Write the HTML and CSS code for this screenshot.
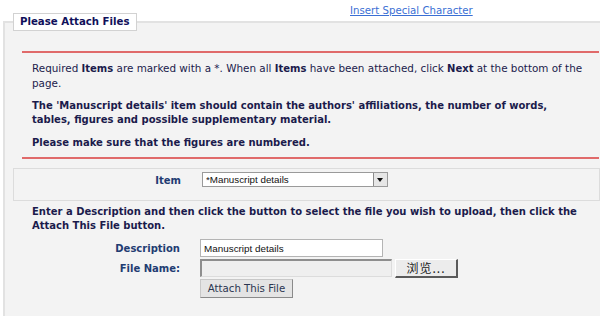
FILE: index.html
```html
<!DOCTYPE html>
<html lang="en">
<head>
  <meta charset="UTF-8" />
  <title>Attach Files</title>
  <link rel="stylesheet" href="styles.css">
</head>
<body>

  <div class="top-row">
    <a href="#" class="special-link">Insert Special Character</a>
  </div>

  <fieldset class="attach">
    <legend>Please Attach Files</legend>

    <div class="notice">
      <p>Required <b>Items</b> are marked with a *. When all <b>Items</b> have been attached, click <b>Next</b> at the bottom of the page.</p>
      <p class="strong">The 'Manuscript details' item should contain the authors' affiliations, the number of words, tables, figures and possible supplementary material.</p>
      <p class="strong">Please make sure that the figures are numbered.</p>
    </div>

    <div class="item-row">
      <label for="itemType" class="field-label">Item</label>
      <div class="select-wrap">
        <select id="itemType">
          <option>*Manuscript details</option>
          <option>Figure</option>
          <option>Table</option>
        </select>
        <span class="select-arrow"></span>
      </div>
    </div>

    <p class="instructions">Enter a Description and then click the button to select the file you wish to upload, then click the Attach This File button.</p>

    <div class="upload-grid">
      <label for="desc" class="field-label">Description</label>
      <input type="text" id="desc" class="desc-input" value="Manuscript details"/>

      <label for="fileName" class="field-label">File Name:</label>
      <div class="file-row">
        <input type="text" id="fileName" class="file-input" readonly/>
        <button type="button" class="browse-btn">浏览...</button>
      </div>

      <span></span>
      <div>
        <button type="button" class="attach-btn">Attach This File</button>
      </div>
    </div>
  </fieldset>

</body>
</html>
```

FILE: styles.css
```css
html {
  overflow: hidden;
}

body {
  margin: 0;
  background: #fff;
  font-family: 'DejaVu Sans', Verdana, sans-serif;
  font-size: 10.4px;
  color: #1b1b4c;
}

b,
.strong {
  font-weight: bold;
  font-size: 10px;
}

.top-row {
  height: 13px;
  padding-left: 350px;
}

.special-link {
  display: inline-block;
  margin-top: 4px;
  line-height: 14px;
  color: #3a6fd4;
  font-size: 10.2px;
}

.attach {
  margin: 0 -4px 0 3px;
  padding: 0 0 20px;
  border: 2px solid #e2e2e2;
  background: #f3f3f3;
  min-width: 0;
}

.attach legend {
  margin-left: 8px;
  padding: 0 6px;
  background: #fff;
  border: 1px solid #d2d2d2;
  font-weight: bold;
  font-size: 10.2px;
  line-height: 16px;
  color: #10105a;
}

.notice {
  margin: 20px 3px 0 17px;
  padding: 8px 12px 7px 10px;
  border-top: 2px solid #e06a6a;
  border-bottom: 2px solid #e06a6a;
}

.notice p {
  margin: 0 0 9px;
  line-height: 14px;
}

.notice p:last-child {
  margin-bottom: 0;
}

.item-row {
  display: flex;
  align-items: flex-start;
  gap: 21px;
  margin: 9px 2px 0 8px;
  padding: 3px 0 11px;
  border: 1px solid #dcdcdc;
}

.field-label {
  font-weight: bold;
  font-size: 10px;
  color: #1f3c72;
  text-align: right;
}

.item-row .field-label {
  width: 167px;
  line-height: 16px;
  margin-top: 1px;
}

.select-wrap {
  position: relative;
  width: 186px;
  height: 15px;
}

.select-wrap select {
  appearance: none;
  width: 100%;
  height: 15px;
  margin: 0;
  padding: 0 0 0 3px;
  border: 1px solid #9a9a9a;
  border-radius: 0;
  background: #fff;
  font-family: 'Liberation Sans', Arial, sans-serif;
  font-size: 9.8px;
  color: #111;
  line-height: 13px;
}

.select-arrow {
  position: absolute;
  top: 1px;
  right: 1px;
  width: 13px;
  height: 13px;
  background: #e6e6e6;
  border-left: 1px solid #8c8c8c;
}

.select-arrow::after {
  content: "";
  position: absolute;
  left: 3px;
  top: 5px;
  border-left: 3px solid transparent;
  border-right: 3px solid transparent;
  border-top: 4px solid #111;
}

.instructions {
  margin: 4px 8px 0 27px;
  line-height: 14px;
  font-weight: bold;
  font-size: 10px;
}

.upload-grid {
  display: grid;
  grid-template-columns: 175px auto;
  column-gap: 20px;
  row-gap: 1px;
  align-items: center;
  margin-top: 6px;
}

.desc-input {
  width: 183px;
  height: 18px;
  box-sizing: border-box;
  margin: 0;
  padding: 0 3px;
  border: 1px solid #b4b4b4;
  background: #fff;
  font-family: 'Liberation Sans', Arial, sans-serif;
  font-size: 9.9px;
  color: #111;
}

.file-row {
  display: flex;
  gap: 3px;
  margin-top: 1px;
}

.file-input {
  width: 192px;
  height: 18px;
  box-sizing: border-box;
  margin: 0;
  border: 1px solid #dcdcdc;
  border-top: 2px solid #8e8e8e;
  border-left: 2px solid #8e8e8e;
  background: #efefef;
}

.browse-btn {
  width: 63px;
  height: 19px;
  margin: 0;
  padding: 0;
  border: 1px solid #fff;
  border-right: 2px solid #5a5a5a;
  border-bottom: 2px solid #5a5a5a;
  background: #ececec;
  font-family: 'Noto Sans CJK SC', sans-serif;
  font-size: 12px;
  line-height: 14px;
  letter-spacing: 1px;
  color: #222;
}

.attach-btn {
  width: 93px;
  height: 19px;
  margin: 0;
  padding: 0;
  border: 1px solid #c8c8c8;
  border-right-color: #8a8a8a;
  border-bottom-color: #8a8a8a;
  background: #e4e4e4;
  font-family: 'DejaVu Sans', Verdana, sans-serif;
  font-size: 10.2px;
  color: #2a3550;
}
```
